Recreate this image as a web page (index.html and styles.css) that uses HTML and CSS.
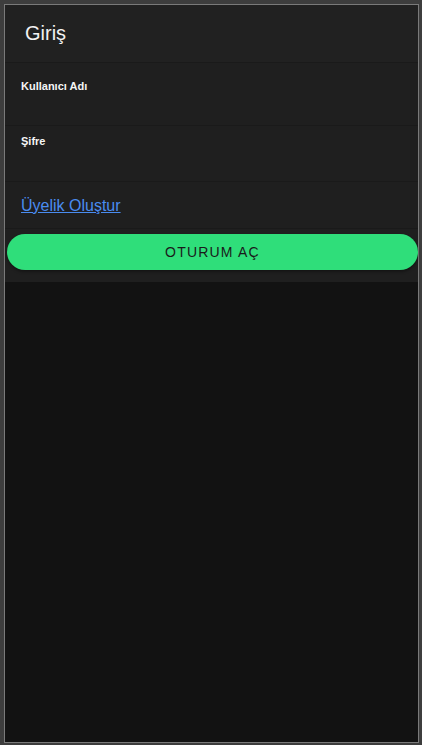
FILE: index.html
```html
<!DOCTYPE html>
<html lang="tr">
<head>
<meta charset="utf-8">
<title>Giriş</title>
<link rel="stylesheet" href="styles.css">
</head>
<body>
<div class="device">
  <div class="screen">
    <div class="panel">
      <header class="header"><h1 class="title">Giriş</h1></header>
      <div class="field field-user"><label class="label">Kullanıcı Adı</label></div>
      <div class="field field-pass"><label class="label">Şifre</label></div>
      <div class="link-row"><a class="link" href="#">Üyelik Oluştur</a></div>
      <div class="button-row"><button class="btn">OTURUM AÇ</button></div>
    </div>
  </div>
</div>
</body>
</html>
```

FILE: styles.css
```css
* { box-sizing: border-box; }
html, body { margin: 0; padding: 0; }
body {
  width: 422px;
  height: 745px;
  background: #3d3d3d;
  font-family: "Liberation Sans", Arial, sans-serif;
  overflow: hidden;
}
.device {
  margin: 4px 0 0 4px;
  width: 415px;
  height: 739px;
  border: 1px solid #7a7a7a;
  background: #121212;
}
.screen { height: 100%; }
.panel {
  background: #1f1f1f;
  padding-bottom: 12px;
}
.header {
  height: 58px;
  background: #212121;
  border-bottom: 1px solid #1a1a1a;
  display: flex;
  align-items: center;
  padding-left: 20px;
}
.title {
  margin: 0;
  font-size: 20px;
  font-weight: normal;
  color: #f2f2f2;
}
.field {
  border-bottom: 1px solid #1a1a1a;
  padding-left: 16px;
}
.field-user {
  height: 63px;
  padding-top: 17px;
}
.field-pass {
  height: 56px;
  padding-top: 9px;
}
.label {
  display: block;
  font-size: 11px;
  line-height: 13px;
  font-weight: bold;
  color: #f5f5f5;
}
.link-row {
  height: 47px;
  border-bottom: 1px solid #1a1a1a;
  padding: 15px 0 0 16px;
  line-height: 18px;
}
.link {
  font-size: 16px;
  color: #4a8cf0;
  text-decoration: underline;
}
.button-row {
  padding: 5px 0 0 2px;
}
.btn {
  display: block;
  width: 411px;
  height: 36px;
  border: none;
  border-radius: 18px;
  background: #2fde7a;
  color: #1a1a1a;
  font-family: "Liberation Sans", Arial, sans-serif;
  font-size: 14px;
  letter-spacing: 1.2px;
  box-shadow: 0 2px 3px rgba(0,0,0,0.35);
  padding: 0;
}
```
